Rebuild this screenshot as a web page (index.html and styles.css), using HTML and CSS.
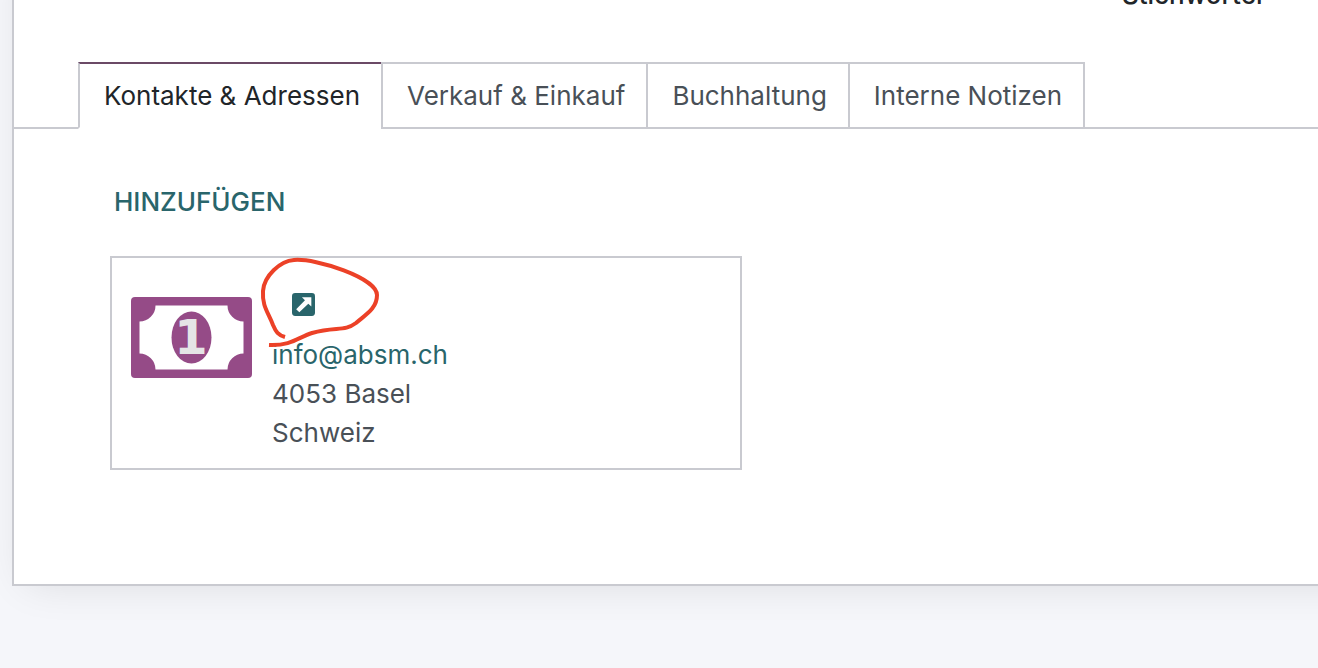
FILE: index.html
```html
<!DOCTYPE html>
<html lang="de">
<head>
<meta charset="utf-8">
<meta name="viewport" content="width=device-width, initial-scale=1">
<title>Kontakt</title>
<link rel="stylesheet" href="styles.css">
</head>
<body>
<main class="sheet">
  <div class="field-row"><span class="field-label">Stichwörter</span></div>
  <div class="tabs" role="tablist">
    <button class="tab tab-active" type="button" role="tab" aria-selected="true">Kontakte &amp; Adressen</button>
    <button class="tab" type="button" role="tab" aria-selected="false">Verkauf &amp; Einkauf</button>
    <button class="tab" type="button" role="tab" aria-selected="false">Buchhaltung</button>
    <button class="tab" type="button" role="tab" aria-selected="false">Interne Notizen</button>
  </div>
  <section class="panel" role="tabpanel">
    <button class="add" type="button">Hinzufügen</button>
    <article class="card">
      <svg class="note" viewBox="0 0 121 81" aria-hidden="true">
        <rect width="121" height="81" rx="4" fill="#954b87"/>
        <path d="M24.500 8.500H96.500A16 16 0 0 0 112.500 24.500V56.500A16 16 0 0 0 96.500 72.500H24.500A16 16 0 0 0 8.500 56.500V24.500A16 16 0 0 0 24.500 8.500Z" fill="#fff"/>
        <ellipse cx="60.500" cy="40.500" rx="20" ry="26" fill="#954b87"/>
        <text class="note-digit" x="60" y="57" text-anchor="middle">1</text>
      </svg>
      <div class="details">
        <a class="open" href="#" aria-label="Öffnen">
          <svg class="open-icon" viewBox="0 0 22 22" aria-hidden="true">
            <rect width="22" height="22" rx="3" fill="#29656b"/>
            <path d="M9.500 4H18.500V13L15.600 10.200L7 18.500L4 15.500L12.400 7Z" fill="#fff"/>
          </svg>
        </a>
        <a class="mail" href="mailto:info@absm.ch">info@absm.ch</a>
        <span>4053 Basel</span>
        <span>Schweiz</span>
      </div>
      <svg class="marking" viewBox="0 0 130 100" aria-hidden="true">
        <path d="M29 83C22 81 20 78 17 71C12 58 6 52 7 37C8 22 24 7 38 6C60 4 121 24 121 41C121 55 109 61 100 69C88 78 80 72 56 79C43 83 35 92 13 91" fill="none" stroke="#ec4127" stroke-width="4" stroke-linejoin="round"/>
      </svg>
    </article>
  </section>
</main>
</body>
</html>
```
FILE: styles.css
```css
* { box-sizing: border-box; }
body {
  margin: 0;
  min-height: 100vh;
  overflow: hidden;
  background: #f5f6fa;
  color: #495057;
  font: 26px/39px Inter, "Liberation Sans", sans-serif;
}
button { font: inherit; margin: 0; background: none; border: 0; cursor: pointer; }
a { color: #29656b; text-decoration: none; }
.sheet {
  margin: -64px -60px 0 12px;
  padding-top: 37px;
  background: #fff;
  border: 2px solid #c9cad0;
  box-shadow: 0 10px 40px -14px rgba(0, 0, 0, 0.12);
}
.field-row {
  display: flex;
  justify-content: flex-end;
  padding-right: 110px;
  margin-bottom: 48px;
}
.field-label { color: #212529; font-weight: 500; }
.tabs {
  display: flex;
  padding-left: 64px;
  box-shadow: inset 0 -2px #c9cad0;
}
.tab {
  padding: 12px 21px 12px 24px;
  border: 2px solid #c9cad0;
  color: #495057;
  white-space: nowrap;
}
.tab + .tab { margin-left: -2px; }
.tab-active {
  background: #fff;
  border-top-color: #6b4a66;
  border-bottom-color: #fff;
  color: #212529;
}
.panel { padding: 53px 96px 114px; }
.add {
  display: block;
  padding: 0 4px;
  margin-bottom: 35px;
  color: #29656b;
  font-weight: 500;
  text-transform: uppercase;
}
.card {
  position: relative;
  display: flex;
  gap: 20px;
  max-width: 632px;
  padding: 20px 19px 16px;
  border: 2px solid #c9cad0;
}
.note { width: 121px; height: 81px; margin-top: 19px; flex: none; }
.note-digit { font: bold 48px "DejaVu Sans", sans-serif; fill: #e5e4e6; }
.details { display: flex; flex-direction: column; align-items: flex-start; }
.open { display: flex; height: 57px; padding: 15px 20px; }
.open-icon { width: 23px; height: 23px; }
.marking {
  position: absolute;
  left: 144px;
  top: -4px;
  width: 130px;
  height: 100px;
  pointer-events: none;
}
```
